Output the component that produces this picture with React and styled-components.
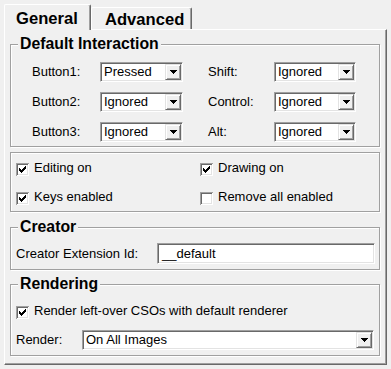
import React from "react";
import styled, { createGlobalStyle } from "styled-components";

const GlobalStyle = createGlobalStyle`
  html, body { margin: 0; padding: 0; background: #f0f0f0; }
  body {
    font-family: "Liberation Sans", Arial, sans-serif;
    font-size: 13px;
    color: #000;
  }
`;

const Dialog = styled.div`
  box-sizing: border-box;
  width: 391px;
  height: 369px;
  padding: 4px 0 0 4px;
  background: #f0f0f0;
  overflow: hidden;
`;

const TabBar = styled.div`
  display: flex;
  align-items: flex-start;
  height: 25px;
  position: relative;
  z-index: 1;
`;

const Tab = styled.div`
  box-sizing: border-box;
  width: ${(p) => p.$width}px;
  height: ${(p) => (p.$active ? 26 : 22)}px;
  margin-top: ${(p) => (p.$active ? 0 : 3)}px;
  padding: ${(p) => (p.$active ? 5 : 3)}px 0 0 ${(p) => p.$indent}px;
  background: #f0f0f0;
  border-top: 1px solid #fff;
  border-left: 1px solid #fff;
  border-right: 1px solid #696969;
  box-shadow: inset -1px 0 #a0a0a0;
  border-radius: 2px 2px 0 0;
  font-weight: bold;
  font-size: 16.6px;
  line-height: 18px;
  white-space: nowrap;
`;

const Pane = styled.div`
  box-sizing: border-box;
  width: 383px;
  height: 336px;
  border: 1px solid;
  border-color: #fff #696969 #696969 #fff;
  box-shadow: inset -1px -1px #a0a0a0;
  padding: 5px 6px 0 5px;
  display: flex;
  flex-direction: column;
  gap: 5px;
`;

const Group = styled.fieldset`
  margin: ${(p) => p.$offset || 0}px 0 0 0;
  padding: 0;
  min-width: 0;
  border: 1px solid #a0a0a0;
  box-shadow: inset 1px 1px #fff, 1px 1px #fff;
`;

const Legend = styled.legend`
  margin-left: 7px;
  padding: 0 2px;
  font-weight: bold;
  font-size: 15.8px;
  line-height: 18px;
  background: #f0f0f0;
`;

const Label = styled.span`
  line-height: 16px;
  white-space: nowrap;
`;

const InteractionGrid = styled.div`
  display: grid;
  grid-template-columns: 68px 108px 66px 82px;
  grid-auto-rows: 20px;
  row-gap: 10px;
  align-items: center;
  padding: 9px 0 4px 21px;
`;

const Combo = styled.div`
  box-sizing: border-box;
  width: ${(p) => (p.$width ? `${p.$width}px` : "100%")};
  height: 20px;
  display: flex;
  align-items: center;
  background: #fff;
  border: 1px solid;
  border-color: #a0a0a0 #fff #fff #a0a0a0;
  box-shadow: inset 1px 1px #696969, inset -1px -1px #e3e3e3;
  padding: 1px 1px 1px 3px;
`;

const ComboText = styled.span`
  flex: 1;
  line-height: 16px;
  white-space: nowrap;
  overflow: hidden;
`;

const DropButton = styled.span`
  box-sizing: border-box;
  flex: none;
  width: 16px;
  height: 16px;
  display: flex;
  align-items: center;
  justify-content: center;
  background: #f0f0f0;
  border: 1px solid;
  border-color: #e3e3e3 #696969 #696969 #e3e3e3;
  box-shadow: inset 1px 1px #fff, inset -1px -1px #a0a0a0;
`;

const OptionGrid = styled.div`
  display: grid;
  grid-template-columns: 184px 1fr;
  grid-auto-rows: 16px;
  row-gap: 13px;
  align-items: center;
  padding: 7px 0 6px 5px;
`;

const CheckRow = styled.label`
  display: flex;
  align-items: center;
  gap: 5px;
  height: 16px;
`;

const Box = styled.span`
  box-sizing: border-box;
  flex: none;
  width: 13px;
  height: 13px;
  background: #fff;
  box-shadow: inset 1px 1px #a0a0a0, inset -1px -1px #fff,
    inset 2px 2px #696969, inset -2px -2px #e3e3e3;
  display: block;
  position: relative;
  top: 1px;
`;

const FieldRow = styled.div`
  display: grid;
  grid-template-columns: ${(p) => p.$labelWidth}px 1fr;
  align-items: center;
`;

const CreatorBody = styled.div`
  padding: 7px 4px 5px 5px;
`;

const TextInput = styled.div`
  box-sizing: border-box;
  height: 21px;
  display: flex;
  align-items: center;
  background: #fff;
  border: 1px solid;
  border-color: #a0a0a0 #fff #fff #a0a0a0;
  box-shadow: inset 1px 1px #696969, inset -1px -1px #e3e3e3;
  padding: 0 4px;
  line-height: 16px;
`;

const RenderBody = styled.div`
  display: flex;
  flex-direction: column;
  gap: 11px;
  padding: 10px 5px 5px 5px;
`;

const Arrow = () => (
  <svg width="7" height="4" viewBox="0 0 7 4" shapeRendering="crispEdges">
    <path d="M0 0h7v1h-7z M1 1h5v1h-5z M2 2h3v1h-3z M3 3h1v1h-1z" fill="#000" />
  </svg>
);

const CheckMark = () => (
  <svg width="13" height="13" viewBox="0 0 13 13" shapeRendering="crispEdges" style={{ display: "block" }}>
    <path
      d="M9 3h1v1h-1z M8 4h2v1h-2z M3 5h1v1h-1z M7 5h3v1h-3z M3 6h2v1h-2z M6 6h3v1h-3z M3 7h5v1h-5z M4 8h3v1h-3z M5 9h1v1h-1z"
      fill="#000"
    />
  </svg>
);

const ComboBox = ({ value, width }) => (
  <Combo $width={width}>
    <ComboText>{value}</ComboText>
    <DropButton>
      <Arrow />
    </DropButton>
  </Combo>
);

const CheckBox = ({ checked, label }) => (
  <CheckRow>
    <Box>{checked && <CheckMark />}</Box>
    <Label>{label}</Label>
  </CheckRow>
);

const interactions = [
  ["Button1:", "Pressed", "Shift:", "Ignored"],
  ["Button2:", "Ignored", "Control:", "Ignored"],
  ["Button3:", "Ignored", "Alt:", "Ignored"],
];

export default function App() {
  return (
    <>
      <GlobalStyle />
      <Dialog>
        <TabBar>
          <Tab $active $width={87} $indent={11}>General</Tab>
          <Tab $width={101} $indent={13}>Advanced</Tab>
        </TabBar>
        <Pane>
          <Group>
            <Legend>Default Interaction</Legend>
            <InteractionGrid>
              {interactions.map(([l1, v1, l2, v2]) => (
                <React.Fragment key={l1}>
                  <Label>{l1}</Label>
                  <ComboBox value={v1} width={83} />
                  <Label>{l2}</Label>
                  <ComboBox value={v2} width={82} />
                </React.Fragment>
              ))}
            </InteractionGrid>
          </Group>

          <Group>
            <OptionGrid>
              <CheckBox checked label="Editing on" />
              <CheckBox checked label="Drawing on" />
              <CheckBox checked label="Keys enabled" />
              <CheckBox label="Remove all enabled" />
            </OptionGrid>
          </Group>

          <Group $offset={1}>
            <Legend>Creator</Legend>
            <CreatorBody>
              <FieldRow $labelWidth={141}>
                <Label>Creator Extension Id:</Label>
                <TextInput>__default</TextInput>
              </FieldRow>
            </CreatorBody>
          </Group>

          <Group>
            <Legend>Rendering</Legend>
            <RenderBody>
              <CheckBox checked label="Render left-over CSOs with default renderer" />
              <FieldRow $labelWidth={66}>
                <Label>Render:</Label>
                <ComboBox value="On All Images" />
              </FieldRow>
            </RenderBody>
          </Group>
        </Pane>
      </Dialog>
    </>
  );
}
